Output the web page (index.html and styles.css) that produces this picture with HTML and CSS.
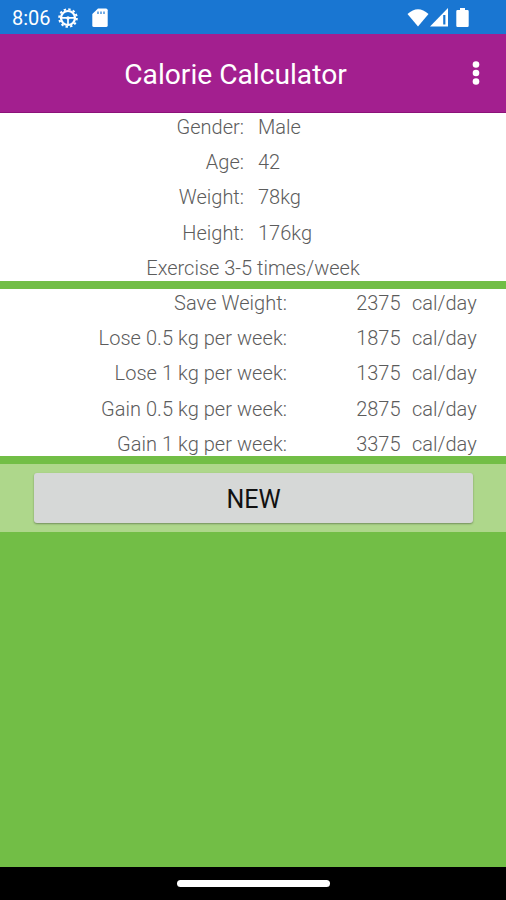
FILE: index.html
```html
<!DOCTYPE html>
<html lang="en">
<head>
  <meta charset="utf-8">
  <meta name="viewport" content="width=device-width, initial-scale=1">
  <title>Calorie Calculator</title>
  <link rel="stylesheet" href="styles.css">
</head>
<body>
  <!-- status bar -->
  <div class="status-bar">
    <span class="clock">8:06</span>
    <svg class="icon-gear" width="20" height="20" viewBox="0 0 20 20">
      <circle cx="10" cy="10" r="8.8" fill="none" stroke="#fff" stroke-width="2" stroke-dasharray="2.4 2.208"/>
      <circle cx="10" cy="10" r="7" fill="none" stroke="#fff" stroke-width="2.2"/>
      <path d="M3 9.8h14M10 10v7" stroke="#fff" stroke-width="1.7"/>
      <circle cx="10" cy="10" r="1.8" fill="#fff"/>
    </svg>
    <svg class="icon-sd" width="16" height="20" viewBox="0 0 16 20">
      <path d="M6 .5h8q1.700 0 1.700 1.700v15.200q0 1.700-1.700 1.700H2Q.3 19.100.3 17.400V6z" fill="#fff"/>
      <path d="M6 3.500v2.500M9 3.500v2.500M12 3.500v2.500" stroke="#1976d2" stroke-width="1.200"/>
    </svg>
    <div class="status-right">
      <svg width="22" height="18" viewBox="0 0 22 18">
        <path d="M.5 5Q11-4.500 21.500 5L11 17.500z" fill="#fff"/>
      </svg>
      <svg class="icon-signal" width="19" height="19" viewBox="0 0 19 19">
        <path d="M18 0v18.500H0z" fill="#fff"/>
        <path d="M14.300 7v9.500" stroke="#1976d2" stroke-width="2.200"/>
      </svg>
      <svg class="icon-battery" width="13" height="20" viewBox="0 0 13 20">
        <path d="M4 0h5v2h2.500q1.200 0 1.200 1.200v14.600q0 1.200-1.200 1.200h-10Q.3 19 .3 17.800V3.200Q.3 2 1.500 2H4z" fill="#fff"/>
      </svg>
    </div>
  </div>

  <!-- title bar -->
  <header class="toolbar">
    <h1>Calorie Calculator</h1>
    <button class="menu" aria-label="Menu">
      <svg width="8" height="24" viewBox="0 0 8 24">
        <circle cx="4" cy="3.500" r="3.300" fill="#fff"/>
        <circle cx="4" cy="12" r="3.300" fill="#fff"/>
        <circle cx="4" cy="20.500" r="3.300" fill="#fff"/>
      </svg>
    </button>
  </header>

  <!-- user data -->
  <section class="panel profile">
    <div class="row"><span class="label">Gender:</span><span>Male</span></div>
    <div class="row"><span class="label">Age:</span><span>42</span></div>
    <div class="row"><span class="label">Weight:</span><span>78kg</span></div>
    <div class="row"><span class="label">Height:</span><span>176kg</span></div>
    <p class="exercise">Exercise 3-5 times/week</p>
  </section>

  <!-- calories -->
  <section class="panel results">
    <div class="row"><span class="label">Save Weight:</span><span class="value">2375</span><span>cal/day</span></div>
    <div class="row"><span class="label">Lose 0.5 kg per week:</span><span class="value">1875</span><span>cal/day</span></div>
    <div class="row"><span class="label">Lose 1 kg per week:</span><span class="value">1375</span><span>cal/day</span></div>
    <div class="row"><span class="label">Gain 0.5 kg per week:</span><span class="value">2875</span><span>cal/day</span></div>
    <div class="row"><span class="label">Gain 1 kg per week:</span><span class="value">3375</span><span>cal/day</span></div>
  </section>

  <div class="actions">
    <button class="new-button">NEW</button>
  </div>

  <div class="nav-bar"><div class="handle"></div></div>
</body>
</html>
```
FILE: styles.css
```css
* {
  margin: 0;
  padding: 0;
  box-sizing: border-box;
}
body {
  display: flex;
  flex-direction: column;
  height: 100vh;
  overflow: hidden;
  background-color: #72be46;
  font-family: Roboto, sans-serif;
}
svg {
  display: block;
}

/* status bar */
.status-bar {
  display: flex;
  align-items: center;
  height: 34px;
  padding: 1px 37px 0 12px;
  color: #fff;
  background-color: #1976d2;
}
.clock {
  width: 46px;
  padding-top: 1px;
  font-size: 20px;
  line-height: 33px;
}
.icon-sd {
  margin-left: 14px;
}
.status-right {
  display: flex;
  align-items: center;
  margin-left: auto;
}
.icon-signal {
  margin-left: 1px;
}
.icon-battery {
  margin-left: 7px;
}

/* title bar */
.toolbar {
  display: flex;
  align-items: center;
  height: 79px;
  padding: 0 26px 0 4px;
  color: #fff;
  background-color: #a31f8f;
  border-bottom: 1px solid #8c1279;
}
.toolbar h1 {
  flex: 1;
  padding-top: 2px;
  padding-right: 5px;
  font-size: 28.2px;
  font-weight: 400;
  text-align: center;
}
.menu {
  border: 0;
  background: none;
}

/* white panels */
.panel {
  display: flex;
  flex-direction: column;
  gap: 8px;
  height: 168px;
  padding-top: 1px;
  margin-bottom: 8px;
  color: #5c5c5c;
  background-color: #fff;
  font-size: 20px;
  font-weight: 300;
  line-height: 27.2px;
}
.row {
  display: grid;
}
.label,
.value {
  text-align: right;
}
.profile .row {
  grid-template-columns: 244px 1fr;
  column-gap: 14px;
}
.exercise {
  text-align: center;
}
.results {
  height: 167px;
}
.results .row {
  grid-template-columns: 287px 102px 1fr;
  column-gap: 11.5px;
}
.results .label {
  letter-spacing: 0.05px;
}

/* button */
.actions {
  height: 68px;
  padding: 9px 33px 9px 34px;
  background-color: #aed78b;
}
.new-button {
  width: 100%;
  height: 50px;
  padding-top: 2px;
  border: 0;
  border-radius: 3px;
  color: #111;
  background-color: #d6d8d7;
  box-shadow: 0 1px 2px rgba(0, 0, 0, 0.35);
  font: 400 25px Roboto, sans-serif;
}

/* bottom bar */
.nav-bar {
  display: flex;
  justify-content: center;
  height: 33px;
  margin-top: auto;
  padding-top: 13px;
  background-color: #000;
}
.handle {
  width: 153px;
  height: 7px;
  border-radius: 4px;
  background-color: #fff;
}
```
